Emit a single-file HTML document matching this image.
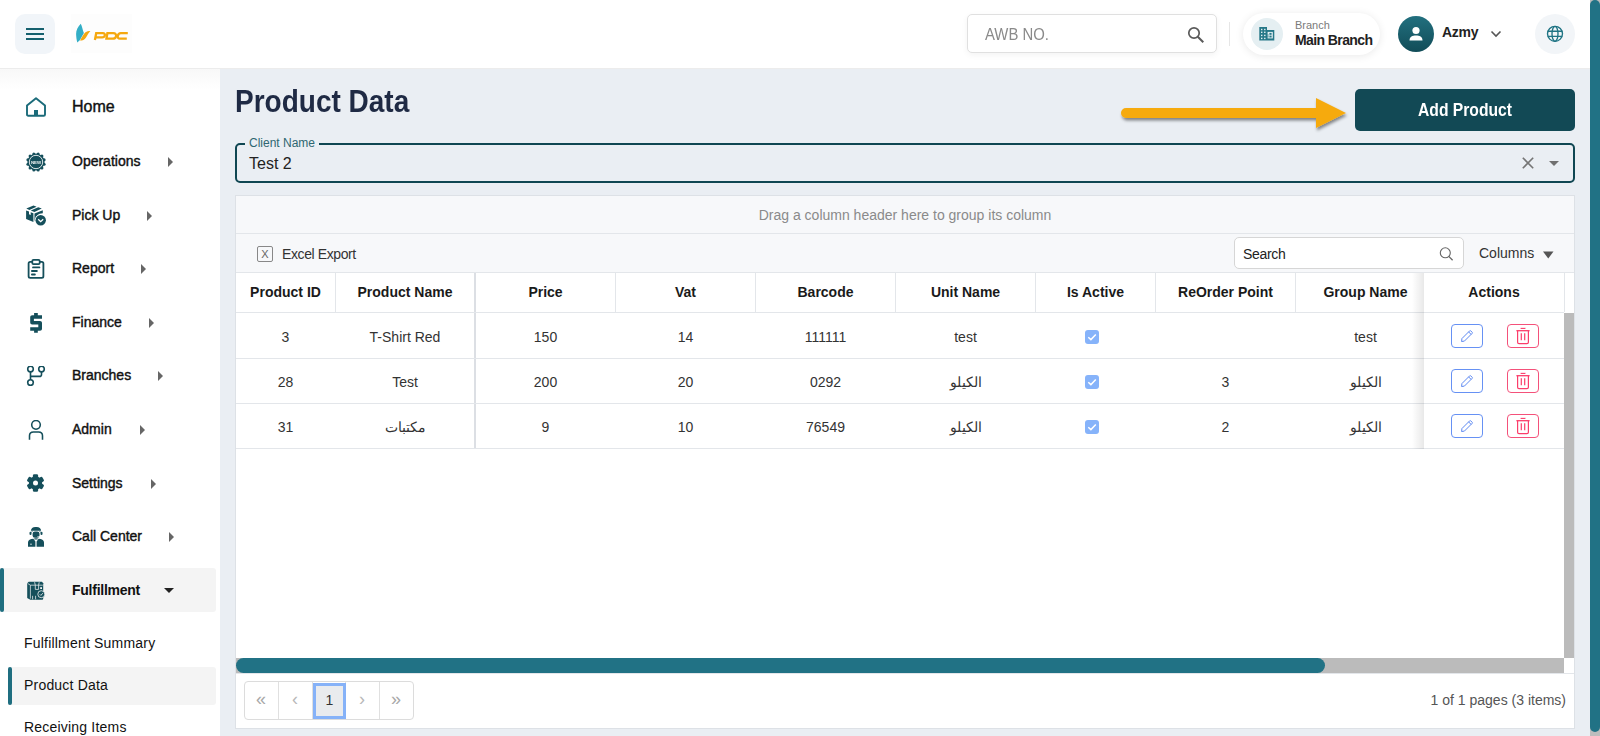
<!DOCTYPE html>
<html><head><meta charset="utf-8">
<style>
*{box-sizing:border-box;margin:0;padding:0}
html,body{width:1600px;height:736px;overflow:hidden}
body{position:relative;background:#eaeef3;font-family:"Liberation Sans",sans-serif;color:#222}
.abs{position:absolute}
/* header */
#hdr{position:absolute;left:0;top:0;width:1590px;height:68px;background:#fff;box-shadow:0 1px 0 #ececec;z-index:5}
#burger{left:15px;top:14px;width:40px;height:40px;border-radius:10px;background:#f1f5f9}
#burger i{position:absolute;left:11px;width:18px;height:2.2px;background:#15606e}
#logo{left:71px;top:14px;width:61px;height:39px;background:#fdfdfd}
#awb{left:967px;top:14px;width:250px;height:39px;border:1px solid #e0e0e0;border-radius:5px;background:#fff;box-shadow:0 2px 6px rgba(0,0,0,.05)}
#awb span{position:absolute;left:17px;top:11px;font-size:16px;color:#8a8a8a;transform:scaleX(.93);transform-origin:0 0;white-space:nowrap}
#sep{left:1229px;top:22px;width:1px;height:24px;background:#e6e6e6}
#branch{left:1243px;top:13px;width:137px;height:42px;border-radius:21px;background:#fff;box-shadow:0 1px 8px rgba(0,0,0,.09)}
#bicon{left:8px;top:5px;width:32px;height:32px;border-radius:50%;background:#e5eff2}
#avatar{left:1398px;top:16px;width:36px;height:36px;border-radius:50%;background:linear-gradient(180deg,#22707f,#114c58)}
#globe{left:1535px;top:14px;width:40px;height:40px;border-radius:50%;background:#f2f5f8}
/* sidebar */
#side{position:absolute;left:0;top:68px;width:220px;height:668px;background:#fff;z-index:4}
.it{position:absolute;left:0;width:216px;height:44px}
.it .lbl{position:absolute;left:72px;top:14px;font-size:14px;color:#111;-webkit-text-stroke:.4px #111;white-space:nowrap}
.it svg.ic{position:absolute;left:26px;top:13px;width:20px;height:20px}
.tri{position:absolute;width:0;height:0;border-top:5px solid transparent;border-bottom:5px solid transparent;border-left:5px solid #666;top:18px}
.act{background:#f4f4f4;border-radius:0 3px 3px 0}
.act:before{content:"";position:absolute;left:0;top:0;width:4px;height:44px;background:#1f6e80;border-radius:2px}
.sub{position:absolute;left:8px;width:208px;height:38px}
.act2{background:#f4f4f4;border-radius:0 3px 3px 0}
.act2:before{content:"";position:absolute;left:0;top:0;width:4px;height:38px;background:#1f6e80;border-radius:2px}
.sub span{position:absolute;left:16px;top:10px;font-size:14px;color:#111;white-space:nowrap;letter-spacing:.2px}
/* main */
#title{left:235px;top:83px;font-size:32px;line-height:37px;font-weight:bold;color:#1f2a44;white-space:nowrap;transform:scaleX(.875);transform-origin:0 0}
#addbtn{left:1355px;top:89px;width:220px;height:42px;background:#124955;border-radius:5px;color:#fff;font-weight:bold;font-size:18px;text-align:center;line-height:42px}
#field{left:235px;top:143px;width:1340px;height:40px;border:2px solid #0f4652;border-radius:5px}
#flabel{left:245px;top:136px;padding:0 4px;background:#eaeef3;font-size:12px;color:#2f6771;white-space:nowrap}
#fval{left:249px;top:155px;font-size:16px;color:#222;white-space:nowrap}
/* grid */
#grid{left:235px;top:195px;width:1340px;height:534px;border:1px solid #dde1e6;background:#fff}
#grp{position:absolute;left:0;top:0;width:1338px;height:37px;background:#f7f8fa;border-bottom:1px solid #e0e3e8}
#grp span{position:absolute;left:0;width:1338px;text-align:center;top:12px;font-size:14px;color:#888}
#tb{position:absolute;left:0;top:37px;width:1338px;height:40px;background:#f7f8fa;border-bottom:1px solid #e0e3e8}
.cell{position:absolute;text-align:center;font-size:14px;white-space:nowrap;color:#333}
.hcell{position:absolute;text-align:center;font-size:14px;font-weight:bold;white-space:nowrap;color:#1a1a1a}
.vl{position:absolute;width:1px;background:#e3e6ea}
.hl{position:absolute;height:1px;background:#e3e6ea}
</style></head><body>

<div id="hdr">
  <div id="burger" class="abs"><i style="top:14px"></i><i style="top:19px"></i><i style="top:24px"></i></div>
  <div id="logo" class="abs">
    <svg width="61" height="39" viewBox="0 0 61 39" style="position:absolute;left:0;top:0">
      <path d="M9.8 9.7 C7 12.5 5 16 5.1 20 C5.2 23 5.6 26 6.3 28.5 L8.8 26.2 L12.9 19.1 C11.8 17 11.2 12 9.8 9.7 Z" fill="#33aec6"/>
      <path d="M9 26.6 C11 23 12.5 19.8 14.5 18.2 C15.8 17.3 17.5 17 19.4 17 C17.5 19 16.5 21 15 23.5 C13.5 25.8 11.5 26.6 9 26.6 Z" fill="#f5a80f"/>
      <g fill="none" stroke="#f5a80f" stroke-width="2.3">
      <path d="M23.9 26 L25.2 19.2 H31.8 C33.6 19.2 34.1 20.3 33.8 21.5 C33.5 22.7 32.7 23.3 31.2 23.3 H24.6"/>
      <path d="M36.4 19.2 H42.2 C44.6 19.2 45.4 20.7 45 22.4 C44.6 24.1 43.4 24.7 41.4 24.7 H35.4 Z"/>
      <path d="M56.8 19.2 H49.8 C47.8 19.2 47.1 20.4 46.8 21.9 C46.5 23.5 47.1 24.7 49 24.7 H55.8"/>
      </g>
    </svg>
  </div>
  <div id="awb" class="abs"><span>AWB NO.</span>
    <svg class="abs" style="left:219px;top:11px" width="18" height="18" viewBox="0 0 18 18"><circle cx="7" cy="7" r="5.2" fill="none" stroke="#5a5a5a" stroke-width="1.7"/><path d="M10.8 10.8 L16.3 16.3" stroke="#5a5a5a" stroke-width="2"/></svg>
  </div>
  <div id="sep" class="abs"></div>
  <div id="branch" class="abs">
    <div id="bicon" class="abs">
      <svg class="abs" style="left:8px;top:8px" width="16" height="16" viewBox="0 0 16 16"><path d="M0.3 1.1 H8 V4 H15.3 V14.6 H0.3 Z" fill="#267888"/><g fill="#e6f0f3"><rect x="2.0" y="2.8" width="1.4" height="1.4"/><rect x="2.0" y="5.6" width="1.4" height="1.4"/><rect x="2.0" y="8.7" width="1.4" height="1.4"/><rect x="2.0" y="11.7" width="1.4" height="1.4"/><rect x="5.1" y="2.8" width="1.4" height="1.4"/><rect x="5.1" y="5.6" width="1.4" height="1.4"/><rect x="5.1" y="8.7" width="1.4" height="1.4"/><rect x="5.1" y="11.7" width="1.4" height="1.4"/><rect x="8.6" y="5.9" width="5.2" height="6.5"/></g><g fill="#267888"><rect x="10.4" y="6.9" width="2.2" height="1.9"/><rect x="10.4" y="9.6" width="2.2" height="1.9"/><rect x="8.6" y="8.5" width="1" height="1"/><rect x="8.6" y="10.3" width="1" height="1"/></g></svg>
    </div>
    <div class="abs" style="left:52px;top:6px;font-size:11px;color:#7a7a7a">Branch</div>
    <div class="abs" style="left:52px;top:19px;font-size:14px;font-weight:bold;color:#222;letter-spacing:-.6px;white-space:nowrap">Main Branch</div>
  </div>
  <div id="avatar" class="abs">
    <svg class="abs" style="left:9px;top:9px" width="18" height="18" viewBox="0 0 18 18"><circle cx="9" cy="5.5" r="3.6" fill="#fff"/><path d="M2.5 15.5 C2.5 11.5 5.5 10.5 9 10.5 C12.5 10.5 15.5 11.5 15.5 15.5 Z" fill="#fff"/></svg>
  </div>
  <div class="abs" style="left:1442px;top:24px;font-size:14px;font-weight:bold;color:#222;letter-spacing:-.3px">Azmy</div>
  <svg class="abs" style="left:1490px;top:30px" width="12" height="8" viewBox="0 0 12 8"><path d="M1.5 1.5 L6 6 L10.5 1.5" fill="none" stroke="#555" stroke-width="1.6"/></svg>
  <div id="globe" class="abs">
    <svg class="abs" style="left:11px;top:11px" width="18" height="18" viewBox="0 0 18 18" fill="none" stroke="#1f7484" stroke-width="1.35"><circle cx="9" cy="8.8" r="7.5"/><ellipse cx="9" cy="8.8" rx="3" ry="7.5"/><path d="M1.8 6.2h14.4M1.8 11.4h14.4"/></svg>
  </div>
</div>

<div id="side">
<div class="abs" style="left:0;top:0;width:220px;height:22px;background:linear-gradient(#f8f8f8,#fff)"></div>
<div class="it" style="top:16px"><svg class="ic" viewBox="0 0 20 20"><path d="M1 8.6 L10 1.2 L19 8.6 V17.4 Q19 18.7 17.7 18.7 H2.3 Q1 18.7 1 17.4 Z" fill="none" stroke="#1b6b7a" stroke-width="1.9" stroke-linejoin="round"/><rect x="8" y="13" width="4" height="5.8" fill="#1b6b7a"/></svg><span class="lbl" style="font-size:16px;">Home</span></div>
<div class="it" style="top:71px"><svg class="ic" viewBox="0 0 20 20" style="overflow:visible"><g fill="#154f5b"><circle cx="10" cy="10" r="8.6"/><circle cx="18.11" cy="12.17" r="1.5"/><circle cx="15.94" cy="15.94" r="1.5"/><circle cx="12.17" cy="18.11" r="1.5"/><circle cx="7.83" cy="18.11" r="1.5"/><circle cx="4.06" cy="15.94" r="1.5"/><circle cx="1.89" cy="12.17" r="1.5"/><circle cx="1.89" cy="7.83" r="1.5"/><circle cx="4.06" cy="4.06" r="1.5"/><circle cx="7.83" cy="1.89" r="1.5"/><circle cx="12.17" cy="1.89" r="1.5"/><circle cx="15.94" cy="4.06" r="1.5"/><circle cx="18.11" cy="7.83" r="1.5"/></g><circle cx="10" cy="10" r="6.7" fill="none" stroke="#fff" stroke-width=".85"/><text x="10" y="11.6" text-anchor="middle" font-family="Liberation Sans" font-weight="bold" font-size="4.4" fill="#fff" opacity=".92">NEW</text></svg><span class="lbl" style="">Operations</span><span class="tri" style="left:168px"></span></div>
<div class="it" style="top:125px"><svg class="ic" viewBox="0 0 20 20" style="overflow:visible"><g transform="translate(0,-1)"><path fill="#154f5b" d="M0.3 3.6 L7.5 0.4 L10.6 1.8 L3.4 5 Z M4.8 5.6 L12.2 2.3 L15.8 3.6 L8.4 7 Z M0.1 5.4 L3 6.5 L3 9.2 L4.7 9.9 L4.7 7.2 L7.4 8.2 L7.4 16.9 L0.1 13.9 Z M8.5 8.5 L16.8 5.2 L16.8 8.2 C12.3 8.2 8.8 11.5 8.8 16 L8.5 16.2 Z"/></g><circle cx="14.7" cy="14.3" r="5.9" fill="#fff"/><circle cx="14.7" cy="14.3" r="5.2" fill="#154f5b"/><path d="M12.2 13.2 L14.7 15.6 L17.2 13.2" fill="none" stroke="#fff" stroke-width="1.3"/></svg><span class="lbl" style="">Pick Up</span><span class="tri" style="left:147px"></span></div>
<div class="it" style="top:178px"><svg class="ic" viewBox="0 0 20 20"><rect x="2.6" y="2.9" width="14.8" height="15.9" rx="1.6" fill="none" stroke="#154f5b" stroke-width="1.8"/><rect x="6.3" y="0.9" width="7.4" height="4.3" rx="1.2" fill="#fff" stroke="#154f5b" stroke-width="1.8"/><path d="M7 8.4 H13.4 M5.9 12 H10.9 M5.9 15.5 H8.9" stroke="#154f5b" stroke-width="1.8" stroke-linecap="round"/></svg><span class="lbl" style="">Report</span><span class="tri" style="left:141px"></span></div>
<div class="it" style="top:232px"><svg class="ic" viewBox="0 0 20 20"><path fill="#154f5b" d="M8.1 0 H11.8 V2.2 H16 V5.8 H7.9 V8 H14 C15.2 8 16 8.8 16 10 V15.8 C16 17 15.2 17.8 14 17.8 H11.8 V19.7 H8.1 V17.8 H4.2 V14.2 H12.3 V11.6 H6.2 C5 11.6 4.2 10.8 4.2 9.6 V4.2 C4.2 3 5 2.2 6.2 2.2 H8.1 Z"/></svg><span class="lbl" style="">Finance</span><span class="tri" style="left:149px"></span></div>
<div class="it" style="top:285px"><svg class="ic" viewBox="0 0 20 20" fill="none" stroke="#154f5b" stroke-width="1.6"><circle cx="4.5" cy="3.1" r="2.8"/><circle cx="15.5" cy="3.1" r="2.8"/><circle cx="4.5" cy="16.6" r="2.8"/><path d="M4.5 5.9 V13.8 M15.5 5.9 V8.4 C15.5 9.6 14.8 10.4 13.5 10.4 H4.5"/></svg><span class="lbl" style="">Branches</span><span class="tri" style="left:158px"></span></div>
<div class="it" style="top:339px"><svg class="ic" viewBox="0 0 20 20" fill="none" stroke="#154f5b" stroke-width="1.55"><circle cx="10" cy="4.85" r="4.3"/><path d="M3.5 19.7 V15.8 C3.5 13.5 5 12 7.4 12 H12.6 C15 12 16.5 13.5 16.5 15.8 V19.7"/></svg><span class="lbl" style="">Admin</span><span class="tri" style="left:140px"></span></div>
<div class="it" style="top:393px"><svg class="ic" viewBox="0 0 20 20"><g transform="translate(9.5 9)" fill="#154f5b"><circle r="6.7"/><rect x="-2.6" y="-8.8" width="5.2" height="5" rx="1.3" transform="rotate(0)"/><rect x="-2.6" y="-8.8" width="5.2" height="5" rx="1.3" transform="rotate(60)"/><rect x="-2.6" y="-8.8" width="5.2" height="5" rx="1.3" transform="rotate(120)"/><rect x="-2.6" y="-8.8" width="5.2" height="5" rx="1.3" transform="rotate(180)"/><rect x="-2.6" y="-8.8" width="5.2" height="5" rx="1.3" transform="rotate(240)"/><rect x="-2.6" y="-8.8" width="5.2" height="5" rx="1.3" transform="rotate(300)"/><circle r="2.5" fill="#fff"/></g></svg><span class="lbl" style="">Settings</span><span class="tri" style="left:151px"></span></div>
<div class="it" style="top:446px"><svg class="ic" viewBox="0 0 20 20"><g fill="#154f5b"><path d="M4.9 3.7 C4.9 1.4 6.8 0 9.2 0 H10.8 C13.2 0 15.1 1.4 15.1 3.7 Z"/><rect x="6.6" y="4.5" width="6.9" height="6.3" rx="2.3"/><rect x="3.5" y="4.7" width="2" height="3.4" rx="1"/><rect x="14.5" y="4.7" width="2" height="3.4" rx="1"/><rect x="8.3" y="11.3" width="3.4" height="1.2"/><path d="M2 19.7 V15.6 C2 13.6 3.4 12.5 5.4 12.1 L7.4 11.8 L9.4 14.4 V19.7 Z M10.6 19.7 V14.4 L12.6 11.8 L14.6 12.1 C16.6 12.5 18 13.6 18 15.6 V19.7 Z"/></g><path d="M5.2 5.5 C5.6 4.6 6 4.3 6.6 4.2 M14.8 5.5 C14.4 4.6 14 4.3 13.4 4.2" fill="none" stroke="#154f5b" stroke-width=".7"/><path d="M14.5 8.6 C14 9.5 12.8 9.6 11.4 9.6" fill="none" stroke="#fff" stroke-width=".7"/><path d="M4 17.2 H6" stroke="#fff" stroke-width=".7"/></svg><span class="lbl" style="">Call Center</span><span class="tri" style="left:169px"></span></div>
<div class="it act" style="top:500px"><svg class="ic" viewBox="0 0 20 20" style="overflow:visible"><path fill="#154f5b" d="M1.2 2.3 L2.7 0.8 H16 L17.2 2.2 V18 L16.6 18.7 H4.3 L1.2 16.9 Z"/><path d="M4.4 4.2 V17.6 M1.6 2.4 L4.4 4.2 H16.8" fill="none" stroke="#f4f4f4" stroke-width=".7"/><path d="M8.6 1.2 L9.3 4.2 V8.4 H12.6 V4.2 L13.2 1.2" fill="none" stroke="#f4f4f4" stroke-width=".75"/><rect x="14.2" y="6.2" width="1.8" height="1.8" fill="#f4f4f4"/><path d="M6.6 14.8 V18.3 M9.6 14.8 V18.3" stroke="#f4f4f4" stroke-width=".75"/><circle cx="15.3" cy="13.2" r="3.5" fill="#154f5b" stroke="#f4f4f4" stroke-width=".8"/><path d="M13.8 13.3 L14.9 14.4 L16.9 12.1" fill="none" stroke="#f4f4f4" stroke-width=".8"/></svg><span class="lbl" style="font-weight:bold;-webkit-text-stroke:0;letter-spacing:-.25px;">Fulfillment</span><span class="abs" style="left:164px;top:20px;width:0;height:0;border-left:5px solid transparent;border-right:5px solid transparent;border-top:5px solid #222"></span></div>
<div class="sub" style="top:557px;background:none"><span>Fulfillment Summary</span></div>
<div class="sub act2" style="top:599px"><span>Product Data</span></div>
<div class="sub" style="top:641px;background:none"><span>Receiving Items</span></div>
</div>

<div id="title" class="abs">Product Data</div>
<svg class="abs" style="left:1115px;top:94px" width="236" height="40" viewBox="0 0 236 40">
  <defs><filter id="sh" x="-10%" y="-30%" width="120%" height="180%"><feDropShadow dx="1" dy="2.5" stdDeviation="1.5" flood-color="#000" flood-opacity=".45"/></filter></defs>
  <g filter="url(#sh)"><path d="M11 14 H201 V4 L231 19 L201 34 V24 H11 A5 5 0 0 1 11 14 Z" fill="#f6aa0c"/></g>
</svg>
<div id="addbtn" class="abs"><span style="display:inline-block;transform:scaleX(.87);position:relative;top:0px">Add Product</span></div>

<div id="field" class="abs"></div>
<div id="flabel" class="abs">Client Name</div>
<div id="fval" class="abs">Test 2</div>
<svg class="abs" style="left:1522px;top:157px" width="12" height="12" viewBox="0 0 12 12"><path d="M.8 .8 L11.2 11.2 M11.2 .8 L.8 11.2" stroke="#757575" stroke-width="1.6"/></svg>
<svg class="abs" style="left:1549px;top:161px" width="10" height="5" viewBox="0 0 10 5"><path d="M0 0 H10 L5 5 Z" fill="#707070"/></svg>

<div id="grid" class="abs"></div>
<div class="abs" style="left:236px;top:196px;width:1338px;height:37px;background:#f7f8fa"></div>
<div class="hl" style="left:236px;top:233px;width:1338px"></div>
<div class="abs" style="left:236px;top:205px;width:1338px;text-align:center;font-size:14px;color:#8a8a8a;line-height:20px">Drag a column header here to group its column</div>
<div class="abs" style="left:236px;top:234px;width:1338px;height:38px;background:#f7f8fa"></div>
<div class="hl" style="left:236px;top:272px;width:1338px"></div>
<div class="abs" style="left:257px;top:246px;width:16px;height:16px;border:1px solid #888;border-radius:2px;font-size:11px;line-height:14px;text-align:center;color:#666">X</div>
<div class="abs" style="left:282px;top:244px;font-size:14px;line-height:20px;color:#333;letter-spacing:-.4px">Excel Export</div>
<div class="abs" style="left:1234px;top:237px;width:230px;height:32px;border:1px solid #d6d6d6;border-radius:5px;background:#fff"></div>
<div class="abs" style="left:1243px;top:244px;font-size:14px;line-height:20px;color:#222;letter-spacing:-.3px">Search</div>
<svg class="abs" style="left:1439px;top:247px" width="16" height="14" viewBox="0 0 16 14"><circle cx="6.3" cy="5.8" r="5" fill="none" stroke="#666" stroke-width="1.1"/><path d="M9.8 9.4 L13.6 13.2" stroke="#666" stroke-width="1.3"/></svg>
<div class="abs" style="left:1479px;top:243px;font-size:14px;line-height:20px;color:#333">Columns</div>
<svg class="abs" style="left:1543px;top:251px" width="11" height="8" viewBox="0 0 11 8"><path d="M0 0.5 H10.5 L5.25 7.5 Z" fill="#555"/></svg>
<div class="hcell" style="left:236px;width:99px;top:282px;line-height:20px">Product ID</div>
<div class="hcell" style="left:336px;width:138px;top:282px;line-height:20px">Product Name</div>
<div class="hcell" style="left:476px;width:139px;top:282px;line-height:20px">Price</div>
<div class="hcell" style="left:616px;width:139px;top:282px;line-height:20px">Vat</div>
<div class="hcell" style="left:756px;width:139px;top:282px;line-height:20px">Barcode</div>
<div class="hcell" style="left:896px;width:139px;top:282px;line-height:20px">Unit Name</div>
<div class="hcell" style="left:1036px;width:119px;top:282px;line-height:20px">Is Active</div>
<div class="hcell" style="left:1156px;width:139px;top:282px;line-height:20px">ReOrder Point</div>
<div class="hcell" style="left:1296px;width:139px;top:282px;line-height:20px">Group Name</div>
<div class="vl" style="left:335px;top:273px;height:39px"></div>
<div class="vl" style="left:615px;top:273px;height:39px"></div>
<div class="vl" style="left:755px;top:273px;height:39px"></div>
<div class="vl" style="left:895px;top:273px;height:39px"></div>
<div class="vl" style="left:1035px;top:273px;height:39px"></div>
<div class="vl" style="left:1155px;top:273px;height:39px"></div>
<div class="vl" style="left:1295px;top:273px;height:39px"></div>
<div class="abs" style="left:474px;top:273px;width:2px;height:176px;background:#dcdfe4"></div>
<div class="hl" style="left:236px;top:312px;width:1328px"></div>
<div class="hl" style="left:236px;top:358px;width:1328px"></div>
<div class="hl" style="left:236px;top:403px;width:1328px"></div>
<div class="hl" style="left:236px;top:448px;width:1328px"></div>
<div class="cell" style="left:236px;width:99px;top:327px;line-height:20px">3</div>
<div class="cell" style="left:336px;width:138px;top:327px;line-height:20px">T-Shirt Red</div>
<div class="cell" style="left:476px;width:139px;top:327px;line-height:20px">150</div>
<div class="cell" style="left:616px;width:139px;top:327px;line-height:20px">14</div>
<div class="cell" style="left:756px;width:139px;top:327px;line-height:20px">111111</div>
<div class="cell" style="left:896px;width:139px;top:327px;line-height:20px">test</div>
<div class="abs" style="left:1085px;top:330px;width:14px;height:14px;border-radius:3px;background:#86b3fa"><svg class="abs" style="left:0;top:0" width="14" height="14" viewBox="0 0 14 14"><path d="M3.3 7.2 L5.9 9.6 L10.8 4.6" fill="none" stroke="#fff" stroke-width="1.5"/></svg></div>
<div class="cell" style="left:1296px;width:139px;top:327px;line-height:20px">test</div>
<div class="cell" style="left:236px;width:99px;top:372px;line-height:20px">28</div>
<div class="cell" style="left:336px;width:138px;top:372px;line-height:20px">Test</div>
<div class="cell" style="left:476px;width:139px;top:372px;line-height:20px">200</div>
<div class="cell" style="left:616px;width:139px;top:372px;line-height:20px">20</div>
<div class="cell" style="left:756px;width:139px;top:372px;line-height:20px">0292</div>
<div class="cell" style="left:896px;width:139px;top:372px;line-height:20px">الكيلو</div>
<div class="abs" style="left:1085px;top:375px;width:14px;height:14px;border-radius:3px;background:#86b3fa"><svg class="abs" style="left:0;top:0" width="14" height="14" viewBox="0 0 14 14"><path d="M3.3 7.2 L5.9 9.6 L10.8 4.6" fill="none" stroke="#fff" stroke-width="1.5"/></svg></div>
<div class="cell" style="left:1156px;width:139px;top:372px;line-height:20px">3</div>
<div class="cell" style="left:1296px;width:139px;top:372px;line-height:20px">الكيلو</div>
<div class="cell" style="left:236px;width:99px;top:417px;line-height:20px">31</div>
<div class="cell" style="left:336px;width:138px;top:417px;line-height:20px">مكتبات</div>
<div class="cell" style="left:476px;width:139px;top:417px;line-height:20px">9</div>
<div class="cell" style="left:616px;width:139px;top:417px;line-height:20px">10</div>
<div class="cell" style="left:756px;width:139px;top:417px;line-height:20px">76549</div>
<div class="cell" style="left:896px;width:139px;top:417px;line-height:20px">الكيلو</div>
<div class="abs" style="left:1085px;top:420px;width:14px;height:14px;border-radius:3px;background:#86b3fa"><svg class="abs" style="left:0;top:0" width="14" height="14" viewBox="0 0 14 14"><path d="M3.3 7.2 L5.9 9.6 L10.8 4.6" fill="none" stroke="#fff" stroke-width="1.5"/></svg></div>
<div class="cell" style="left:1156px;width:139px;top:417px;line-height:20px">2</div>
<div class="cell" style="left:1296px;width:139px;top:417px;line-height:20px">الكيلو</div>
<div class="abs" style="left:1412px;top:273px;width:12px;height:176px;background:linear-gradient(90deg,rgba(0,0,0,0),rgba(0,0,0,.09))"></div>
<div class="abs" style="left:1424px;top:273px;width:140px;height:39px;background:#fff"></div>
<div class="hcell" style="left:1424px;width:140px;top:282px;line-height:20px">Actions</div>
<div class="vl" style="left:1564px;top:273px;height:39px"></div>
<div class="abs" style="left:1424px;top:313px;width:140px;height:44px;background:#fff"></div>
<div class="abs" style="left:1451px;top:324px;width:32px;height:24px;border:1px solid #6691f4;border-radius:4px"><svg class="abs" style="left:8px;top:4px" width="14" height="14" viewBox="0 0 14 14"><path d="M1.6 12.5 L1.9 9.6 L9.7 1.8 C10 1.5 10.4 1.5 10.7 1.8 L12.2 3.3 C12.5 3.6 12.5 4 12.2 4.3 L4.4 12.1 Z M8.6 2.9 L11.1 5.4" fill="none" stroke="#5d89f2" stroke-width="1"/></svg></div>
<div class="abs" style="left:1507px;top:324px;width:32px;height:24px;border:1px solid #f4517a;border-radius:4px"><svg class="abs" style="left:8px;top:2px" width="14" height="18" viewBox="0 0 14 18"><path d="M0.4 3.7 H13.6" stroke="#fb3d6a" stroke-width="1.3"/><path d="M4.6 1.4 H9.4" stroke="#fb3d6a" stroke-width="1.1"/><path d="M1.6 4 V15.2 C1.6 16.1 2.1 16.6 3 16.6 H11 C11.9 16.6 12.4 16.1 12.4 15.2 V4" fill="none" stroke="#fb3d6a" stroke-width="1.2"/><path d="M5.3 6.2 V13.2 M8.7 6.2 V13.2" stroke="#fb3d6a" stroke-width="1.2"/></svg></div>
<div class="abs" style="left:1424px;top:358px;width:140px;height:44px;background:#fff"></div>
<div class="abs" style="left:1451px;top:369px;width:32px;height:24px;border:1px solid #6691f4;border-radius:4px"><svg class="abs" style="left:8px;top:4px" width="14" height="14" viewBox="0 0 14 14"><path d="M1.6 12.5 L1.9 9.6 L9.7 1.8 C10 1.5 10.4 1.5 10.7 1.8 L12.2 3.3 C12.5 3.6 12.5 4 12.2 4.3 L4.4 12.1 Z M8.6 2.9 L11.1 5.4" fill="none" stroke="#5d89f2" stroke-width="1"/></svg></div>
<div class="abs" style="left:1507px;top:369px;width:32px;height:24px;border:1px solid #f4517a;border-radius:4px"><svg class="abs" style="left:8px;top:2px" width="14" height="18" viewBox="0 0 14 18"><path d="M0.4 3.7 H13.6" stroke="#fb3d6a" stroke-width="1.3"/><path d="M4.6 1.4 H9.4" stroke="#fb3d6a" stroke-width="1.1"/><path d="M1.6 4 V15.2 C1.6 16.1 2.1 16.6 3 16.6 H11 C11.9 16.6 12.4 16.1 12.4 15.2 V4" fill="none" stroke="#fb3d6a" stroke-width="1.2"/><path d="M5.3 6.2 V13.2 M8.7 6.2 V13.2" stroke="#fb3d6a" stroke-width="1.2"/></svg></div>
<div class="abs" style="left:1424px;top:403px;width:140px;height:44px;background:#fff"></div>
<div class="abs" style="left:1451px;top:414px;width:32px;height:24px;border:1px solid #6691f4;border-radius:4px"><svg class="abs" style="left:8px;top:4px" width="14" height="14" viewBox="0 0 14 14"><path d="M1.6 12.5 L1.9 9.6 L9.7 1.8 C10 1.5 10.4 1.5 10.7 1.8 L12.2 3.3 C12.5 3.6 12.5 4 12.2 4.3 L4.4 12.1 Z M8.6 2.9 L11.1 5.4" fill="none" stroke="#5d89f2" stroke-width="1"/></svg></div>
<div class="abs" style="left:1507px;top:414px;width:32px;height:24px;border:1px solid #f4517a;border-radius:4px"><svg class="abs" style="left:8px;top:2px" width="14" height="18" viewBox="0 0 14 18"><path d="M0.4 3.7 H13.6" stroke="#fb3d6a" stroke-width="1.3"/><path d="M4.6 1.4 H9.4" stroke="#fb3d6a" stroke-width="1.1"/><path d="M1.6 4 V15.2 C1.6 16.1 2.1 16.6 3 16.6 H11 C11.9 16.6 12.4 16.1 12.4 15.2 V4" fill="none" stroke="#fb3d6a" stroke-width="1.2"/><path d="M5.3 6.2 V13.2 M8.7 6.2 V13.2" stroke="#fb3d6a" stroke-width="1.2"/></svg></div>
<div class="hl" style="left:1424px;top:312px;width:140px"></div>
<div class="hl" style="left:1424px;top:358px;width:140px"></div>
<div class="hl" style="left:1424px;top:403px;width:140px"></div>
<div class="hl" style="left:1424px;top:448px;width:140px"></div>
<div class="abs" style="left:1564px;top:313px;width:10px;height:345px;background:#bbbbbb"></div>
<div class="abs" style="left:236px;top:658px;width:1328px;height:15px;background:#bbbbbb"></div>
<div class="abs" style="left:236px;top:658px;width:1089px;height:15px;background:#217285;border-radius:7.5px"></div>
<div class="hl" style="left:236px;top:673px;width:1338px"></div>
<div class="abs" style="left:244px;top:681px;width:170px;height:39px;border:1px solid #dcdcdc;border-radius:4px;background:#fff"></div>
<div class="vl" style="left:278px;top:682px;height:37px;background:#e0e0e0"></div>
<div class="vl" style="left:379px;top:682px;height:37px;background:#e0e0e0"></div>
<div class="vl" style="left:312px;top:682px;height:37px;background:#e0e0e0"></div>
<div class="vl" style="left:345px;top:682px;height:37px;background:#e0e0e0"></div>
<div class="abs" style="left:313px;top:683px;width:33px;height:36px;border:3px solid #86b2f8;background:#e9ebee"></div>
<div class="abs" style="left:313px;top:690px;width:33px;text-align:center;font-size:14px;line-height:20px;color:#333">1</div>
<div class="abs" style="left:244px;top:689px;width:34px;text-align:center;font-size:18px;line-height:20px;color:#a8a8a8">&laquo;</div>
<div class="abs" style="left:278px;top:689px;width:34px;text-align:center;font-size:18px;line-height:20px;color:#b8b8b8">&lsaquo;</div>
<div class="abs" style="left:345px;top:689px;width:34px;text-align:center;font-size:18px;line-height:20px;color:#b8b8b8">&rsaquo;</div>
<div class="abs" style="left:379px;top:689px;width:34px;text-align:center;font-size:18px;line-height:20px;color:#a8a8a8">&raquo;</div>
<div class="abs" style="left:1300px;top:690px;width:266px;text-align:right;font-size:14px;line-height:20px;color:#555">1 of 1 pages (3 items)</div>

<!-- page scrollbar -->
<div class="abs" style="left:1590px;top:0;width:10px;height:736px;background:#bdbdbd"></div>
<div class="abs" style="left:1590px;top:0;width:10px;height:732px;background:#217285;border-radius:5px"></div>
</body></html>
